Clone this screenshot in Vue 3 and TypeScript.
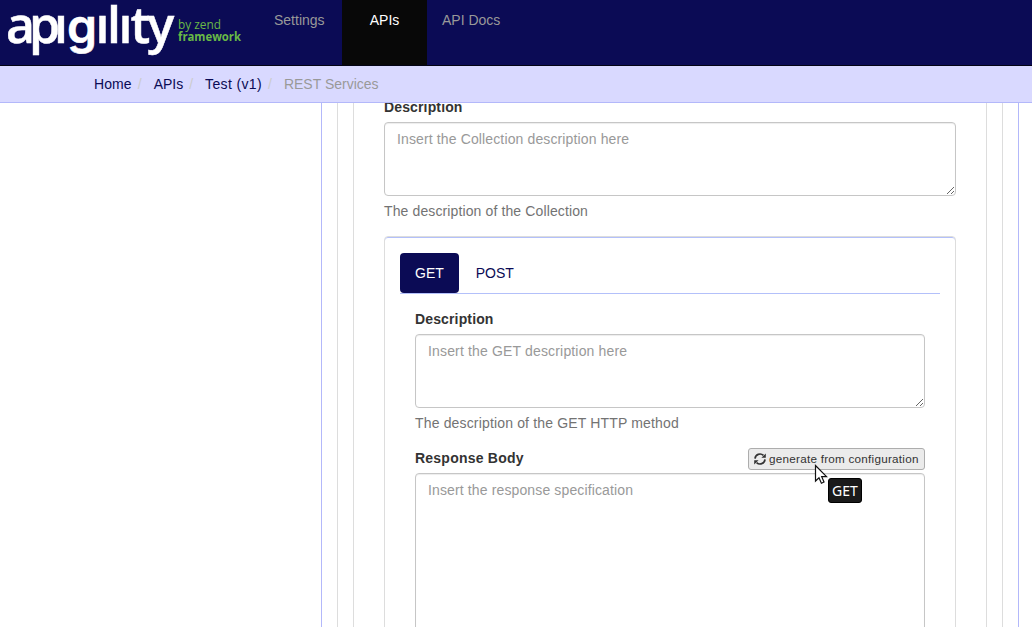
<script setup lang="ts">
interface Crumb {
  label: string
  name: string
}

const navItems = [
  { label: 'Settings', name: 'settings' },
  { label: 'APIs', name: 'apis' },
  { label: 'API Docs', name: 'docs' },
]

const crumbs: Crumb[] = [
  { label: 'Home', name: 'home' },
  { label: 'APIs', name: 'apis' },
  { label: 'Test (v1)', name: 'version' },
  { label: 'REST Services', name: 'active' },
]

const methods = ['GET', 'POST']
const activeMethod = 'GET'
</script>

<template>
  <div class="page">
    <header class="navbar">
      <svg class="logo" width="259" height="65" viewBox="0 0 259 65">
        <text class="wordmark" y="43" x="6 29 54 67 95.5 107 118.5 130.5 147.5">apı<tspan class="round">g</tspan>ılıty</text>
        <text class="byline" x="178" y="29" textLength="43" lengthAdjust="spacingAndGlyphs">by zend</text>
        <text class="byline strong" x="178" y="41" textLength="63" lengthAdjust="spacingAndGlyphs">framework</text>
      </svg>
      <nav class="nav">
        <a v-for="item in navItems" :key="item.name" :class="['nav-link', item.name]">{{ item.label }}</a>
      </nav>
    </header>
    <ol class="breadcrumb">
      <li v-for="crumb in crumbs" :key="crumb.name" :class="crumb.name">{{ crumb.label }}</li>
    </ol>

    <main class="viewport">
      <div class="pane">
        <div class="panel">
          <div class="section">
            <label class="label">Description</label>
            <textarea class="control" placeholder="Insert the Collection description here"></textarea>
            <p class="help">The description of the Collection</p>

            <div class="methods">
              <div class="tabs">
                <a v-for="m in methods" :key="m" :class="['tab', { active: m === activeMethod }]">{{ m }}</a>
              </div>
              <div class="tab-body">
                <label class="label">Description</label>
                <textarea class="control method" placeholder="Insert the GET description here"></textarea>
                <p class="help method">The description of the GET HTTP method</p>
                <div class="body-head">
                  <label class="label">Response Body</label>
                  <button class="generate">
                    <svg width="12" height="12" viewBox="0 0 12 12">
                      <path d="M1 5.6A5 5 0 0 1 9.4 2.4M11 6.4A5 5 0 0 1 2.6 9.6" fill="none" stroke="#333" stroke-width="1.7" />
                      <path d="M11.8 0.4V4.8H7.4ZM0.2 11.6V7.2H4.6Z" fill="#333" />
                    </svg>
                    <span>generate from configuration</span>
                  </button>
                </div>
                <textarea class="control tall" placeholder="Insert the response specification"></textarea>
              </div>
            </div>
          </div>
        </div>
      </div>
    </main>

    <svg class="cursor" width="14" height="21" viewBox="0 0 14 21">
      <path d="M1.5 1.5V17L5 13.7L7.4 19.2L10 18L7.7 12.7H12.5Z" fill="#fff" stroke="#111" stroke-width="1.2" />
    </svg>
    <div class="tooltip">GET</div>
  </div>
</template>

<style>
body {
  margin: 0;
  overflow: hidden;
}
</style>

<style scoped>
.page {
  position: relative;
  display: flex;
  flex-direction: column;
  width: 1032px;
  height: 627px;
  overflow: hidden;
  background: #fff;
  color: #333;
  font: 14px/20px "Liberation Sans", Arial, sans-serif;
}
.page * {
  box-sizing: border-box;
}
.navbar {
  display: flex;
  flex: none;
  height: 66px;
  background: #0b0b55;
  border-bottom: 1px solid #030314;
}
.logo {
  flex: none;
}
.wordmark {
  fill: #fff;
  stroke: #fff;
  stroke-width: 0.5px;
  font: 600 50px "Open Sans", sans-serif;
}
.wordmark .round {
  font: 600 48px Inter, sans-serif;
}
.byline {
  fill: #68b946;
  font: 400 12.5px "Open Sans", sans-serif;
}
.byline.strong {
  font-weight: 700;
}
.nav {
  display: flex;
}
.nav-link {
  padding: 10px 15px;
  color: #999;
  white-space: nowrap;
}
.nav-link.settings {
  width: 83px;
}
.nav-link.apis {
  width: 85px;
  padding: 10px 0;
  background: #080808;
  color: #fff;
  text-align: center;
}
.breadcrumb {
  display: flex;
  flex: none;
  height: 37px;
  margin: 0;
  padding: 8px 0 0 94px;
  background: #d9d9ff;
  border-bottom: 1px solid #b3b8fa;
  list-style: none;
  color: #0b0b55;
}
.breadcrumb li + li::before {
  content: "/";
  padding: 0 12px 0 6px;
  color: #ccc;
  letter-spacing: 0;
}
.breadcrumb .home {
  letter-spacing: 0.1px;
}
.breadcrumb .version {
  letter-spacing: 0.36px;
}
.breadcrumb .active {
  color: #999;
}
.viewport {
  flex: 1;
  min-height: 0;
  padding: 0 13px 0 321px;
  overflow: hidden;
}
.pane {
  height: 600px;
  padding: 0 15px;
  border: solid #b3b8fa;
  border-width: 0 1px;
}
.panel {
  height: 100%;
  padding: 0 15px;
  border: solid #ddd;
  border-width: 0 1px;
}
.section {
  height: 100%;
  padding: 0 30px;
  border: solid #ddd;
  border-width: 0 1px;
}
.label {
  display: block;
  margin-bottom: 5px;
  font-weight: 700;
  letter-spacing: 0.14px;
}
.body-head .label {
  letter-spacing: 0.23px;
}
.section > .label {
  margin-top: -6px;
}
.control {
  display: block;
  width: 100%;
  height: 74px;
  margin: 0;
  padding: 6px 12px;
  border: 1px solid #c6c6c6;
  border-radius: 4px;
  outline: none;
  background: #fff;
  box-shadow: inset 0 1px 1px rgba(0, 0, 0, 0.075);
  color: #555;
  font: inherit;
  letter-spacing: 0.13px;
  resize: vertical;
}
.control.method {
  letter-spacing: 0.16px;
}
.control::placeholder {
  color: #999;
  opacity: 1;
}
.control.tall {
  height: 220px;
}
.help {
  margin: 5px 0 15px;
  color: #737373;
  letter-spacing: 0.12px;
}
.help.method {
  letter-spacing: 0.16px;
}
.methods {
  height: 460px;
  margin-top: 15px;
  padding: 15px;
  border: 1px solid #ddd;
  border-radius: 4px;
  box-shadow: inset 0 1px 0 #b3c0fa;
}
.tabs {
  display: flex;
  gap: 2px;
  height: 41px;
  margin-top: 1px;
  border-bottom: 1px solid #b3c0fa;
}
.tab {
  height: 40px;
  padding: 10px 15px;
  border-radius: 4px;
  color: #0b0b55;
}
.tab.active {
  background: #0b0b55;
  color: #fff;
}
.tab-body {
  padding: 15px 15px 0;
}
.body-head {
  display: flex;
  justify-content: space-between;
  height: 25px;
}
.generate {
  display: flex;
  align-items: center;
  gap: 3px;
  width: 177px;
  height: 22px;
  padding: 0 5px;
  border: 1px solid #adadad;
  border-radius: 3px;
  background: #ebebeb;
  color: #333;
  font: 11.7px/18px "Liberation Sans", Arial, sans-serif;
  letter-spacing: 0.25px;
  white-space: nowrap;
}
.cursor {
  position: absolute;
  left: 814px;
  top: 464px;
}
.tooltip {
  position: absolute;
  left: 828px;
  top: 478px;
  width: 34px;
  height: 25px;
  border: 1px solid #000;
  border-radius: 3px;
  background: #1a1a1a;
  color: #fff;
  font: 14px/24px "Noto Sans", sans-serif;
  text-align: center;
}
</style>
